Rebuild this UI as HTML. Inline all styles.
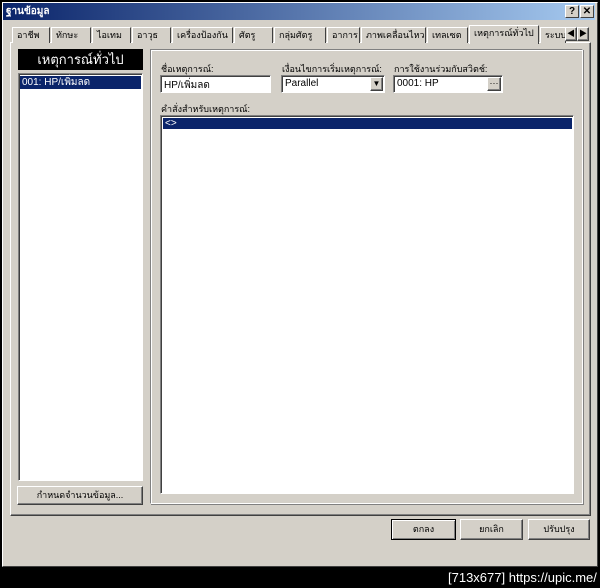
<!DOCTYPE html>
<html><head><meta charset="utf-8"><style>
*{box-sizing:border-box;margin:0;padding:0}
body{width:600px;height:588px;background:#000;position:relative;overflow:hidden;font-family:"Liberation Sans","Noto Sans CJK SC",sans-serif;font-size:11px;color:#000}
.a{position:absolute}
.win{left:2px;top:2px;width:596px;height:565px;background:#d4d0c8;border:1px solid #fff;border-right-color:#404040;border-bottom-color:#404040}
.title{left:3px;top:3px;width:592px;height:17px;background:linear-gradient(90deg,#0a246a,#a6caf0);color:#fff;font-weight:bold;font-size:10px;line-height:17px;padding-left:3px}
.tb{width:14px;height:13px;top:5px;background:#d4d0c8;border:1px solid #fff;border-right-color:#404040;border-bottom-color:#404040;font-weight:bold;font-size:10px;line-height:11px;text-align:center;color:#000}
.raised{background:#d4d0c8;border:1px solid #fff;border-right-color:#404040;border-bottom-color:#404040;box-shadow:inset -1px -1px #808080}
.sunk{background:#fff;border:1px solid #808080;border-right-color:#fff;border-bottom-color:#fff;box-shadow:inset 1px 1px #404040}
.tab{top:27px;height:16px;border:1px solid #fff;border-bottom:none;border-right-color:#404040;background:#d4d0c8;font-size:9px;line-height:14px;padding-left:4px;white-space:nowrap;overflow:hidden}
.lbl{font-size:9px}
.btn{text-align:center;font-size:9px}
</style></head><body>
<div class="a win"></div>
<div class="a title">ฐานข้อมูล</div>
<div class="a tb" style="left:565px">?</div>
<div class="a tb" style="left:580px">✕</div>

<div class="a raised" style="left:10px;top:42px;width:581px;height:474px"></div>
<div class="a tab" style="left:12px;width:38px">อาชีพ</div>
<div class="a tab" style="left:51px;width:40px">ทักษะ</div>
<div class="a tab" style="left:92px;width:39px">ไอเทม</div>
<div class="a tab" style="left:132px;width:39px">อาวุธ</div>
<div class="a tab" style="left:172px;width:61px">เครื่องป้องกัน</div>
<div class="a tab" style="left:234px;width:39px">ศัตรู</div>
<div class="a tab" style="left:274px;width:52px">กลุ่มศัตรู</div>
<div class="a tab" style="left:327px;width:33px">อาการ</div>
<div class="a tab" style="left:361px;width:65px">ภาพเคลื่อนไหว</div>
<div class="a tab" style="left:427px;width:41px">เทลเซต</div>
<div class="a tab" style="left:469px;width:70px;top:25px;height:19px;z-index:2">เหตุการณ์ทั่วไป</div>
<div class="a tab" style="left:540px;width:26px">ระบบ</div>
<div class="a raised btn" style="left:565px;top:27px;width:12px;height:14px;font-size:8px;line-height:12px">◀</div>
<div class="a raised btn" style="left:577px;top:27px;width:12px;height:14px;font-size:8px;line-height:12px">▶</div>

<div class="a" style="left:18px;top:49px;width:125px;height:21px;background:#000;color:#fff;font-size:13px;text-align:center;line-height:21px">เหตุการณ์ทั่วไป</div>
<div class="a sunk" style="left:18px;top:73px;width:125px;height:408px"></div>
<div class="a" style="left:20px;top:76px;width:121px;height:13px;background:#0a246a;color:#fff;font-size:10px;line-height:13px;padding-left:2px">001: HP/เพิ่มลด</div>
<div class="a raised btn" style="left:17px;top:486px;width:126px;height:19px;line-height:17px">กำหนดจำนวนข้อมูล...</div>

<div class="a" style="left:150px;top:49px;width:433px;height:455px;border:1px solid #808080;border-right-color:#fff;border-bottom-color:#fff;box-shadow:inset 1px 1px #fff,1px 1px #808080"></div>
<div class="a lbl" style="left:161px;top:62px">ชื่อเหตุการณ์:</div>
<div class="a sunk" style="left:160px;top:75px;width:111px;height:18px;padding:2px 3px;font-size:10px">HP/เพิ่มลด</div>
<div class="a lbl" style="left:282px;top:62px">เงื่อนไขการเริ่มเหตุการณ์:</div>
<div class="a sunk" style="left:281px;top:75px;width:104px;height:18px;padding:2px 3px;font-size:10px">Parallel</div>
<div class="a raised btn" style="left:370px;top:77px;width:13px;height:14px;font-size:8px;line-height:12px">▼</div>
<div class="a lbl" style="left:394px;top:62px">การใช้งานร่วมกับสวิตช์:</div>
<div class="a sunk" style="left:393px;top:75px;width:110px;height:18px;padding:2px 3px;font-size:10px">0001: HP</div>
<div class="a raised btn" style="left:487px;top:77px;width:14px;height:14px;line-height:10px">···</div>
<div class="a lbl" style="left:161px;top:102px">คำสั่งสำหรับเหตุการณ์:</div>
<div class="a sunk" style="left:160px;top:115px;width:414px;height:379px"></div>
<div class="a" style="left:163px;top:118px;width:409px;height:11px;background:#0a246a;color:#fff;font-size:10px;line-height:11px;padding-left:2px">&lt;&gt;</div>

<div class="a raised btn" style="left:391px;top:519px;width:65px;height:21px;line-height:19px;border:1px solid #000;box-shadow:inset 1px 1px #fff,inset -1px -1px #808080">ตกลง</div>
<div class="a raised btn" style="left:460px;top:519px;width:63px;height:21px;line-height:19px">ยกเลิก</div>
<div class="a raised btn" style="left:528px;top:519px;width:62px;height:21px;line-height:19px">ปรับปรุง</div>

<div class="a" style="left:448px;top:570px;color:#fff;font-size:13px;font-family:'Liberation Sans',sans-serif">[713x677] https://upic.me/</div>
</body></html>
